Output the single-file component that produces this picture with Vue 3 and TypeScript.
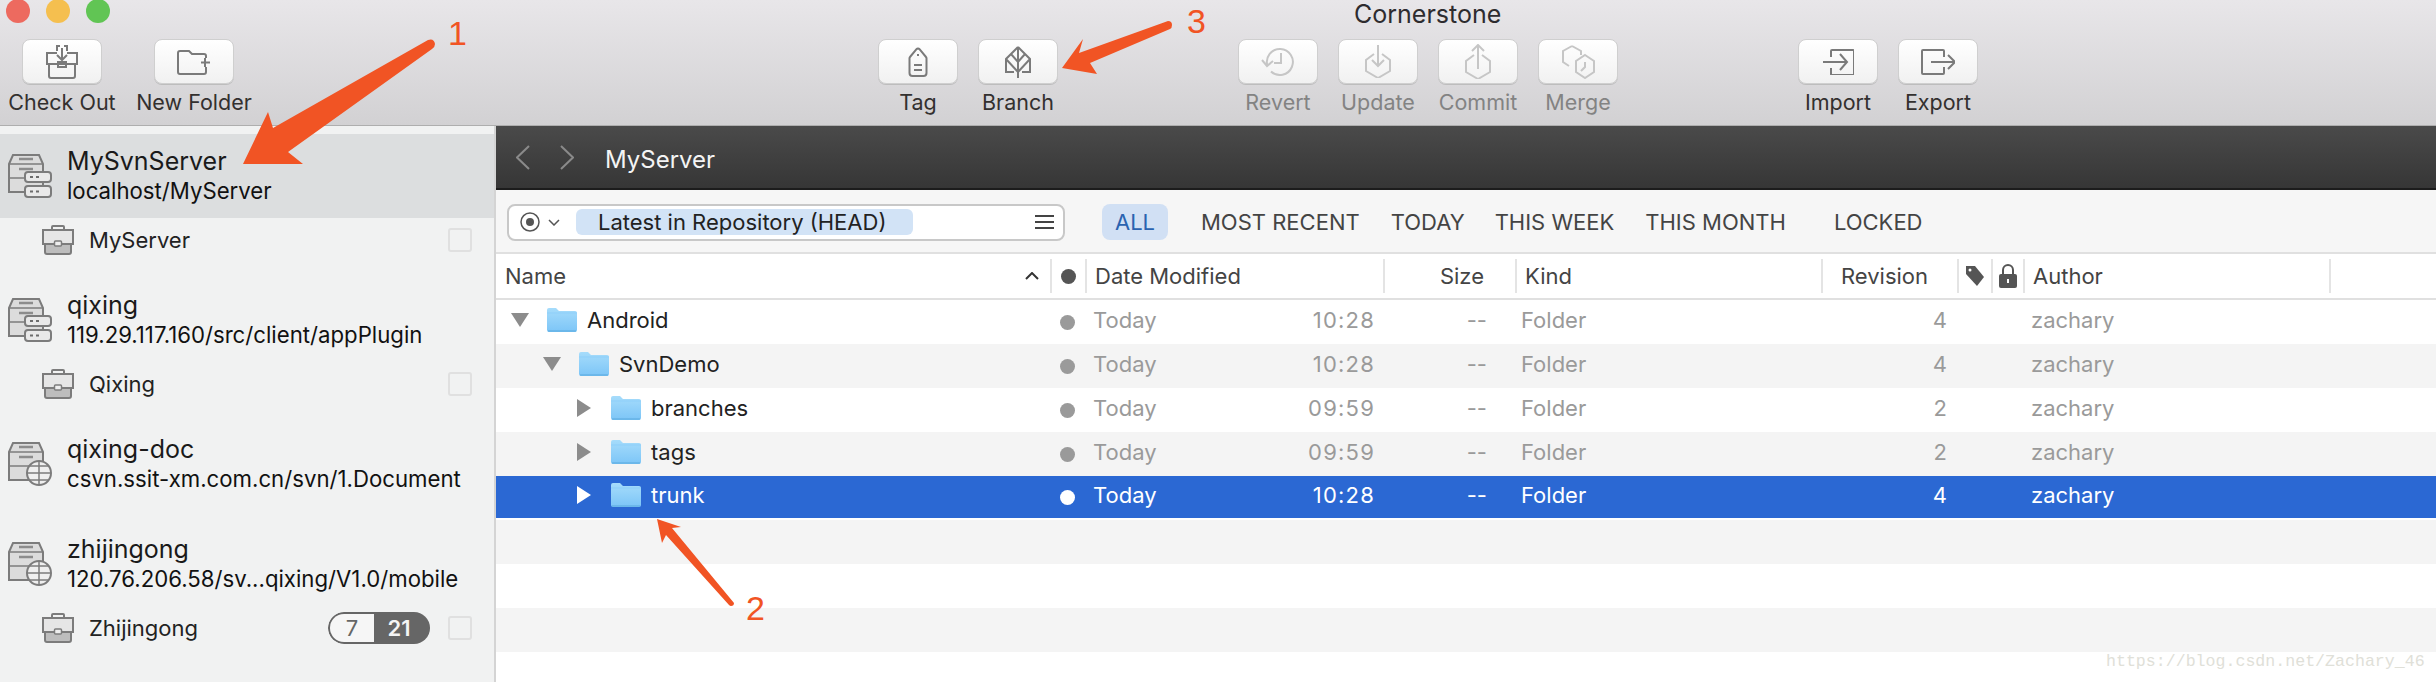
<script setup lang="ts">
interface Tool { label: string; w: number; h: number; d: string; off?: boolean; gap: number }
const tools: Tool[] = [
  { label: 'Check Out', w: 34, h: 34, gap: 22, d: 'M12 8H2v11h30V8H22 M4 19v12a2 2 0 0 0 2 2h22a2 2 0 0 0 2-2V19 M13 17h8v5h-8z M17 3v12 M12 10l5 5 5-5 M12 6V1h3 M22 6V1h-3' },
  { label: 'New Folder', w: 34, h: 26, gap: 52, d: 'M29 9V7a2 2 0 0 0-2-2H15l-3-3H3a2 2 0 0 0-2 2v19a2 2 0 0 0 2 2h24a2 2 0 0 0 2-2v-5 M28 9v9 M24 13.500h9' },
  { label: 'Tag', w: 20, h: 30, gap: 644, d: 'M10 1.500a2 2 0 0 1 1.500.7L18 10a2 2 0 0 1 .5 1.300V26a3 3 0 0 1-3 3H4.500a3 3 0 0 1-3-3V11.300a2 2 0 0 1 .5-1.300L8.500 2.200a2 2 0 0 1 1.500-.7z M6 18h8 M6 23h8 M9 8h2' },
  { label: 'Branch', w: 28, h: 32, gap: 20, d: 'M14 1L2 13v13h8 M14 1l12 12v13h-8 M14 1v31 M2 13l12 13 12-13 M7 8l7 8 7-8' },
  { label: 'Revert', w: 34, h: 30, gap: 180, off: true, d: 'M6.500 19A13 13 0 1 1 10 24.500 M1 13l5 6 6-5 M20 6v10h-7' },
  { label: 'Update', w: 26, h: 33, gap: 20, off: true, d: 'M9 9L1 15v11l12 7 12-7V15l-8-6 M13 0v21 M7 15l6 6 6-6' },
  { label: 'Commit', w: 26, h: 35, gap: 20, off: true, d: 'M9 11L1 17v11l12 7 12-7V17l-8-6 M13 25V1 M7 7l6-6 6 6' },
  { label: 'Merge', w: 34, h: 34, gap: 20, off: true, d: 'M11 1L2 6v11l6 4 M11 1l9 5v4 M24 10l9 6v11l-9 6-9-6V16z M24 17v5l-4 4' },
  { label: 'Import', w: 31, h: 26, gap: 180, d: 'M8 8V2a1 1 0 0 1 1-1h21a1 1 0 0 1 1 1v23a1 1 0 0 1-1 1H9a1 1 0 0 1-1-1v-6 M0 13h24 M17 5l7 8-7 8' },
  { label: 'Export', w: 34, h: 26, gap: 20, d: 'M23 8V2a1 1 0 0 0-1-1H2a1 1 0 0 0-1 1v22a1 1 0 0 0 1 1h20a1 1 0 0 0 1-1v-6 M10 13h24 M27 6l7 7-7 7' }
]

interface Repo { title: string; url: string; remote: boolean; child?: string; active?: boolean; badge?: boolean }
const repos: Repo[] = [
  { title: 'MySvnServer', url: 'localhost/MyServer', remote: false, child: 'MyServer', active: true },
  { title: 'qixing', url: '119.29.117.160/src/client/appPlugin', remote: false, child: 'Qixing' },
  { title: 'qixing-doc', url: 'csvn.ssit-xm.com.cn/svn/1.Document', remote: true },
  { title: 'zhijingong', url: '120.76.206.58/sv...qixing/V1.0/mobile', remote: true, child: 'Zhijingong', badge: true }
]

const filters = [
  { label: 'MOST RECENT', gap: 33 },
  { label: 'TODAY', gap: 31 },
  { label: 'THIS WEEK', gap: 30 },
  { label: 'THIS MONTH', gap: 31 },
  { label: 'LOCKED', gap: 48 }
]

interface Row { name: string; depth: number; open: boolean; time: string; rev: number; selected?: boolean }
const rows: Row[] = [
  { name: 'Android', depth: 0, open: true, time: '10:28', rev: 4 },
  { name: 'SvnDemo', depth: 1, open: true, time: '10:28', rev: 4 },
  { name: 'branches', depth: 2, open: false, time: '09:59', rev: 2 },
  { name: 'tags', depth: 2, open: false, time: '09:59', rev: 2 },
  { name: 'trunk', depth: 2, open: false, time: '10:28', rev: 4, selected: true }
]
</script>

<template>
  <div class="window">
    <header class="toolbar">
      <div class="titlebar">
        <span class="light red"></span>
        <span class="light yellow"></span>
        <span class="light green"></span>
        <span class="title">Cornerstone</span>
      </div>
      <div class="tools">
        <div v-for="t in tools" :key="t.label" class="tool" :class="{ off: t.off }" :style="{ marginLeft: t.gap + 'px' }">
          <div class="tool-btn">
            <svg :width="t.w" :height="t.h" :viewBox="`0 0 ${t.w} ${t.h}`" fill="none" stroke="currentColor" stroke-width="2">
              <path :d="t.d" />
            </svg>
          </div>
          <span class="tool-label">{{ t.label }}</span>
        </div>
      </div>
    </header>

    <div class="body">
      <aside class="sidebar">
        <section v-for="r in repos" :key="r.title" class="repo">
          <div class="repo-head" :class="{ active: r.active }">
            <svg class="server" width="44" height="44" viewBox="0 0 44 44">
              <path d="M1 10L5 1h26l4 9v28H1z" fill="#dcdcdc" stroke="#7c7c7c" stroke-width="2" />
              <path d="M1 10h34M1 24h34" stroke="#7c7c7c" stroke-width="1.500" fill="none" />
              <path d="M11 5h14M11 15h14" stroke="#8c8c8c" stroke-width="2.500" fill="none" />
              <template v-if="r.remote">
                <circle cx="31" cy="31" r="12" fill="#efefef" stroke="#7c7c7c" stroke-width="2" />
                <path d="M19 31h24M31 19v24M22 24h18M22 38h18" stroke="#7c7c7c" stroke-width="1.500" fill="none" />
              </template>
              <template v-else>
                <rect x="17" y="18" width="26" height="10" rx="3" fill="#e9e9e9" stroke="#7c7c7c" stroke-width="2" />
                <rect x="17" y="32" width="26" height="11" rx="3" fill="#e9e9e9" stroke="#7c7c7c" stroke-width="2" />
                <path d="M22 23h3M28 23h3M22 37.500h3M28 37.500h3" stroke="#6c6c6c" stroke-width="2" fill="none" />
              </template>
            </svg>
            <div class="repo-text">
              <div class="repo-title">{{ r.title }}</div>
              <div class="repo-url">{{ r.url }}</div>
            </div>
          </div>
          <div v-if="r.child" class="repo-child">
            <svg class="case" width="32" height="30" viewBox="0 0 32 30">
              <path d="M10 5V2a1 1 0 0 1 1-1h10a1 1 0 0 1 1 1v3" fill="none" stroke="#7c7c7c" stroke-width="2" />
              <path d="M1 5h30v14H1z" fill="#e6e6e6" stroke="#7c7c7c" stroke-width="2" />
              <path d="M3 19h26v8a2 2 0 0 1-2 2H5a2 2 0 0 1-2-2z" fill="#bdbdbd" stroke="#7c7c7c" stroke-width="2" />
              <rect x="12.500" y="16" width="7" height="5" rx="1" fill="#eee" stroke="#7c7c7c" stroke-width="1.500" />
            </svg>
            <span class="child-name">{{ r.child }}</span>
            <span v-if="r.badge" class="badge"><span class="badge-a">7</span><span class="badge-b">21</span></span>
            <span class="check"></span>
          </div>
        </section>
      </aside>

      <main class="main">
        <div class="pathbar">
          <svg width="14" height="25" viewBox="0 0 14 25" fill="none" stroke="#8a8a8a" stroke-width="2"><path d="M13 1L1 12.500 13 24" /></svg>
          <svg class="next" width="14" height="25" viewBox="0 0 14 25" fill="none" stroke="#8a8a8a" stroke-width="2"><path d="M1 1l12 11.500L1 24" /></svg>
          <span class="path-name">MyServer</span>
        </div>

        <div class="filterbar">
          <div class="search">
            <svg width="20" height="20" viewBox="0 0 20 20"><circle cx="10" cy="10" r="9" fill="none" stroke="#555" stroke-width="1.500" /><circle cx="10" cy="10" r="4" fill="#555" /></svg>
            <svg class="chev" width="12" height="7" viewBox="0 0 12 7" fill="none" stroke="#555" stroke-width="1.500"><path d="M1 1l5 5 5-5" /></svg>
            <span class="token">Latest in Repository (HEAD)</span>
            <svg class="menu" width="19" height="14" viewBox="0 0 19 14" stroke="#444" stroke-width="2"><path d="M0 1h19M0 7h19M0 13h19" /></svg>
          </div>
          <span class="filter all">ALL</span>
          <span v-for="f in filters" :key="f.label" class="filter" :style="{ marginLeft: f.gap + 'px' }">{{ f.label }}</span>
        </div>

        <div class="cols thead">
          <div class="th name-th">Name
            <svg width="14" height="8" viewBox="0 0 14 8" fill="none" stroke="#333" stroke-width="2"><path d="M1 7l6-6 6 6" /></svg>
          </div>
          <div class="th sep center"><span class="dot head-dot"></span></div>
          <div class="th sep">Date Modified</div>
          <div class="th sep right">Size</div>
          <div class="th sep">Kind</div>
          <div class="th sep rev-th">Revision</div>
          <div class="th sep center">
            <svg width="20" height="22" viewBox="0 0 20 22"><path d="M1 1h9l9 11-7 9-11-12z" fill="#555" /><circle cx="5" cy="5" r="1.500" fill="#fff" /></svg>
          </div>
          <div class="th sep center">
            <svg width="18" height="24" viewBox="0 0 18 24"><path d="M4 10V6a5 5 0 0 1 10 0v4" fill="none" stroke="#555" stroke-width="2" /><rect y="10" width="18" height="14" rx="2" fill="#555" /><rect x="8" y="15" width="2" height="4" fill="#fff" /></svg>
          </div>
          <div class="th sep">Author</div>
          <div class="th sep"></div>
        </div>

        <div class="rowlist">
          <div v-for="r in rows" :key="r.name" class="cols tr" :class="{ selected: r.selected }">
            <div class="td name-td" :style="{ paddingLeft: 15 + r.depth * 32 + 'px' }">
              <svg v-if="r.open" class="tri" width="18" height="14" viewBox="0 0 18 14"><path d="M0 0h18L9 14z" fill="#8c8c8c" /></svg>
              <svg v-else class="tri" width="18" height="18" viewBox="0 0 18 18"><path d="M2 0l14 9-14 9z" class="tri-fill" /></svg>
              <svg class="folder" width="30" height="24" viewBox="0 0 30 24">
                <defs>
                  <linearGradient id="fold" x1="0" y1="0" x2="0" y2="1"><stop offset="0" stop-color="#a6dcfb" /><stop offset="1" stop-color="#7cc5f7" /></linearGradient>
                </defs>
                <path d="M0 2a2 2 0 0 1 2-2h7l3 3h16a2 2 0 0 1 2 2v17a2 2 0 0 1-2 2H2a2 2 0 0 1-2-2z" fill="url(#fold)" />
                <path d="M0 5h30" stroke="#8ecff9" stroke-width="1" />
                <path d="M1 23h28" stroke="#5aa9dd" stroke-width="1" />
              </svg>
              <span class="row-name">{{ r.name }}</span>
            </div>
            <div class="td center"><span class="dot"></span></div>
            <div class="td date-td lift"><span>Today</span><span class="time">{{ r.time }}</span></div>
            <div class="td right lift">--</div>
            <div class="td kind-td lift">Folder</div>
            <div class="td rev-td lift">{{ r.rev }}</div>
            <div class="td"></div>
            <div class="td"></div>
            <div class="td author-td lift">zachary</div>
            <div class="td"></div>
          </div>
          <div class="empty alt"></div>
          <div class="empty"></div>
          <div class="empty alt"></div>
        </div>
      </main>
    </div>

    <svg class="notes" width="2436" height="682" viewBox="0 0 2436 682">
      <g fill="#f15424">
        <path d="M428 40Q434 38 435 44 435 47 432 49L288 152 303 164 243 164 268 112 273 128z" />
        <path d="M1168 21q4 0 4 4 0 3-2 4L1090 63l7 11-35-6 21-29-4 14z" />
        <path d="M657 519l24 8-9 1 62 75q0 3-3 3-1 0-2-1l-63-70-4 8z" />
        <text x="448" y="45" class="num">1</text>
        <text x="746" y="620" class="num">2</text>
        <text x="1187" y="33" class="num">3</text>
      </g>
    </svg>
    <span class="mark">https://blog.csdn.net/Zachary_46</span>
  </div>
</template>

<style>
html, body { margin: 0; padding: 0; background: #fff; }
</style>

<style scoped>
.window { position: relative; width: 2436px; height: 682px; overflow: hidden; display: flex; flex-direction: column; font-family: Inter, "Liberation Sans", sans-serif; color: #222; }
.toolbar { height: 125px; flex: none; border-bottom: 1px solid #aeaeae; background: linear-gradient(#e8e6e9, #d2d1d3); }
.titlebar { height: 39px; display: flex; align-items: flex-start; padding-left: 6px; gap: 16px; }
.light { width: 24px; height: 24px; border-radius: 50%; margin-top: -1px; }
.red { background: #ed6a5f; } .yellow { background: #f5bf4f; } .green { background: #61c554; }
.title { margin-left: 1228px; margin-top: 1px; font-size: 25px; line-height: 26px; color: #2e2c2f; }
.tools { display: flex; }
.tool { width: 80px; display: flex; flex-direction: column; align-items: center; color: #7a7a7a; }
.tool-btn { width: 78px; height: 43px; border: 1px solid #cfcfcf; border-radius: 8px; background: linear-gradient(#fff, #f1f1f1); display: flex; align-items: center; justify-content: center; box-shadow: 0 1px 0 #bdbdbd; }
.tool-label { margin-top: 5px; font-size: 21.500px; line-height: 26px; color: #33302f; white-space: nowrap; }
.tool.off { color: #c6c6c6; }
.tool.off .tool-label { color: #838383; }
.body { flex: 1; display: flex; min-height: 0; }
.sidebar { width: 494px; flex: none; background: #f1f2f2; border-right: 2px solid #d4d4d4; padding-top: 8px; }
.repo { margin-bottom: 16px; }
.repo-head { height: 84px; display: flex; align-items: center; padding-left: 8px; }
.repo-head.active { background: #dcdedf; }
.repo-text { margin-left: 15px; }
.repo-title { font-size: 25px; line-height: 30px; color: #1a1a1a; }
.repo-url { font-size: 22.200px; line-height: 30px; color: #111; white-space: nowrap; }
.repo-child { height: 44px; display: flex; align-items: center; padding-left: 42px; }
.child-name { margin-left: 15px; font-size: 22px; color: #222; }
.badge { margin-left: auto; height: 32px; width: 102px; display: flex; border-radius: 16px; overflow: hidden; font-size: 22px; line-height: 32px; text-align: center; box-sizing: border-box; }
.badge-a { width: 46px; border: 2px solid #666; border-right: 0; border-radius: 16px 0 0 16px; line-height: 28px; color: #666; box-sizing: border-box; background: #f6f6f6; }
.badge-b { flex: 1; background: #666; color: #f4f4f4; font-weight: 600; padding-right: 6px; }
.check { width: 20px; height: 20px; margin-left: 18px; margin-right: 22px; border: 2px solid #e0e0e0; border-radius: 3px; flex: none; }
.repo-child .check:nth-child(3) { margin-left: auto; }
.main { flex: 1; min-width: 0; display: flex; flex-direction: column; }
.pathbar { height: 62px; flex: none; background: linear-gradient(#4a4a4a, #363636); border-bottom: 2px solid #1c1c1c; display: flex; align-items: center; padding-left: 20px; }
.next { margin-left: 30px; }
.path-name { margin-left: 31px; margin-top: 5px; font-size: 24px; color: #f4f4f4; }
.filterbar { height: 64px; box-sizing: border-box; padding-top: 2px; flex: none; background: #f6f6f6; border-bottom: 2px solid #e0e0e0; display: flex; align-items: center; padding-left: 11px; }
.search { width: 543px; height: 33px; border: 2px solid #c8c8c8; border-radius: 8px; background: #fff; display: flex; align-items: center; padding-left: 11px; flex: none; }
.chev { margin-left: 8px; }
.token { margin-left: 16px; height: 26px; width: 337px; border-radius: 6px; background: #d2e3f6; font-size: 22px; line-height: 26px; padding-left: 22px; box-sizing: border-box; color: #222; white-space: nowrap; }
.menu { margin-left: auto; margin-right: 9px; }
.filter { font-size: 22px; color: #444; white-space: nowrap; }
.filter.all { margin-left: 37px; width: 66px; height: 36px; line-height: 36px; text-align: center; background: #d1e0f4; color: #2a63b0; border-radius: 8px; }
.cols { display: grid; grid-template-columns: 554px 35px 298px 132px 306px 136px 34px 32px 306px 1fr; }
.thead { height: 44px; flex: none; align-items: center; background: #fff; border-bottom: 2px solid #e0e0e0; }
.th { height: 34px; display: flex; align-items: center; font-size: 22px; color: #444; padding-left: 9px; }
.th.sep { border-left: 2px solid #e4e4e4; padding-left: 8px; }
.name-th { justify-content: space-between; padding-right: 11px; }
.th.center { justify-content: center; padding: 0; }
.th.right { justify-content: flex-end; padding: 0 31px 0 0; }
.rev-th { padding-left: 18px !important; }
.dot { width: 15px; height: 15px; border-radius: 50%; background: #9a9a9a; display: block; }
.head-dot { background: #555; }
.rowlist { flex: 1; }
.tr { height: 44px; align-items: center; font-size: 22px; color: #9a9a9a; }
.tr:nth-child(even) { background: #f4f4f4; }
.tr.selected { background: #2b68d3; height: 42px; margin-bottom: 2px; color: #fff; }
.tr.selected .dot { background: #fff; }
.td { display: flex; align-items: center; min-width: 0; }
.td.center { justify-content: center; }
.td.right { justify-content: flex-end; padding-right: 28px; }
.lift { padding-bottom: 4px; }
.date-td { justify-content: space-between; padding-left: 8px; padding-right: 8px; }
.time { letter-spacing: 1.200px; }
.kind-td { padding-left: 6px; }
.rev-td { justify-content: flex-end; padding-right: 10px; }
.author-td { padding-left: 8px; }
.name-td { color: #222; padding-bottom: 4px; }
.tr.selected .name-td { color: #fff; }
.tri { width: 18px; flex: none; }
.tri-fill { fill: #8c8c8c; }
.tr.selected .tri-fill { fill: #fff; }
.folder { margin-left: 18px; flex: none; }
.row-name { margin-left: 10px; }
.empty { height: 44px; }
.empty.alt { background: #f4f4f4; }
.notes { position: absolute; left: 0; top: 0; pointer-events: none; }
.num { font-family: "Liberation Sans", sans-serif; font-size: 34px; }
.mark { position: absolute; left: 2106px; top: 652px; font-family: "Liberation Mono", monospace; font-size: 16.600px; line-height: 20px; color: #e0e0d8; white-space: nowrap; }
</style>
